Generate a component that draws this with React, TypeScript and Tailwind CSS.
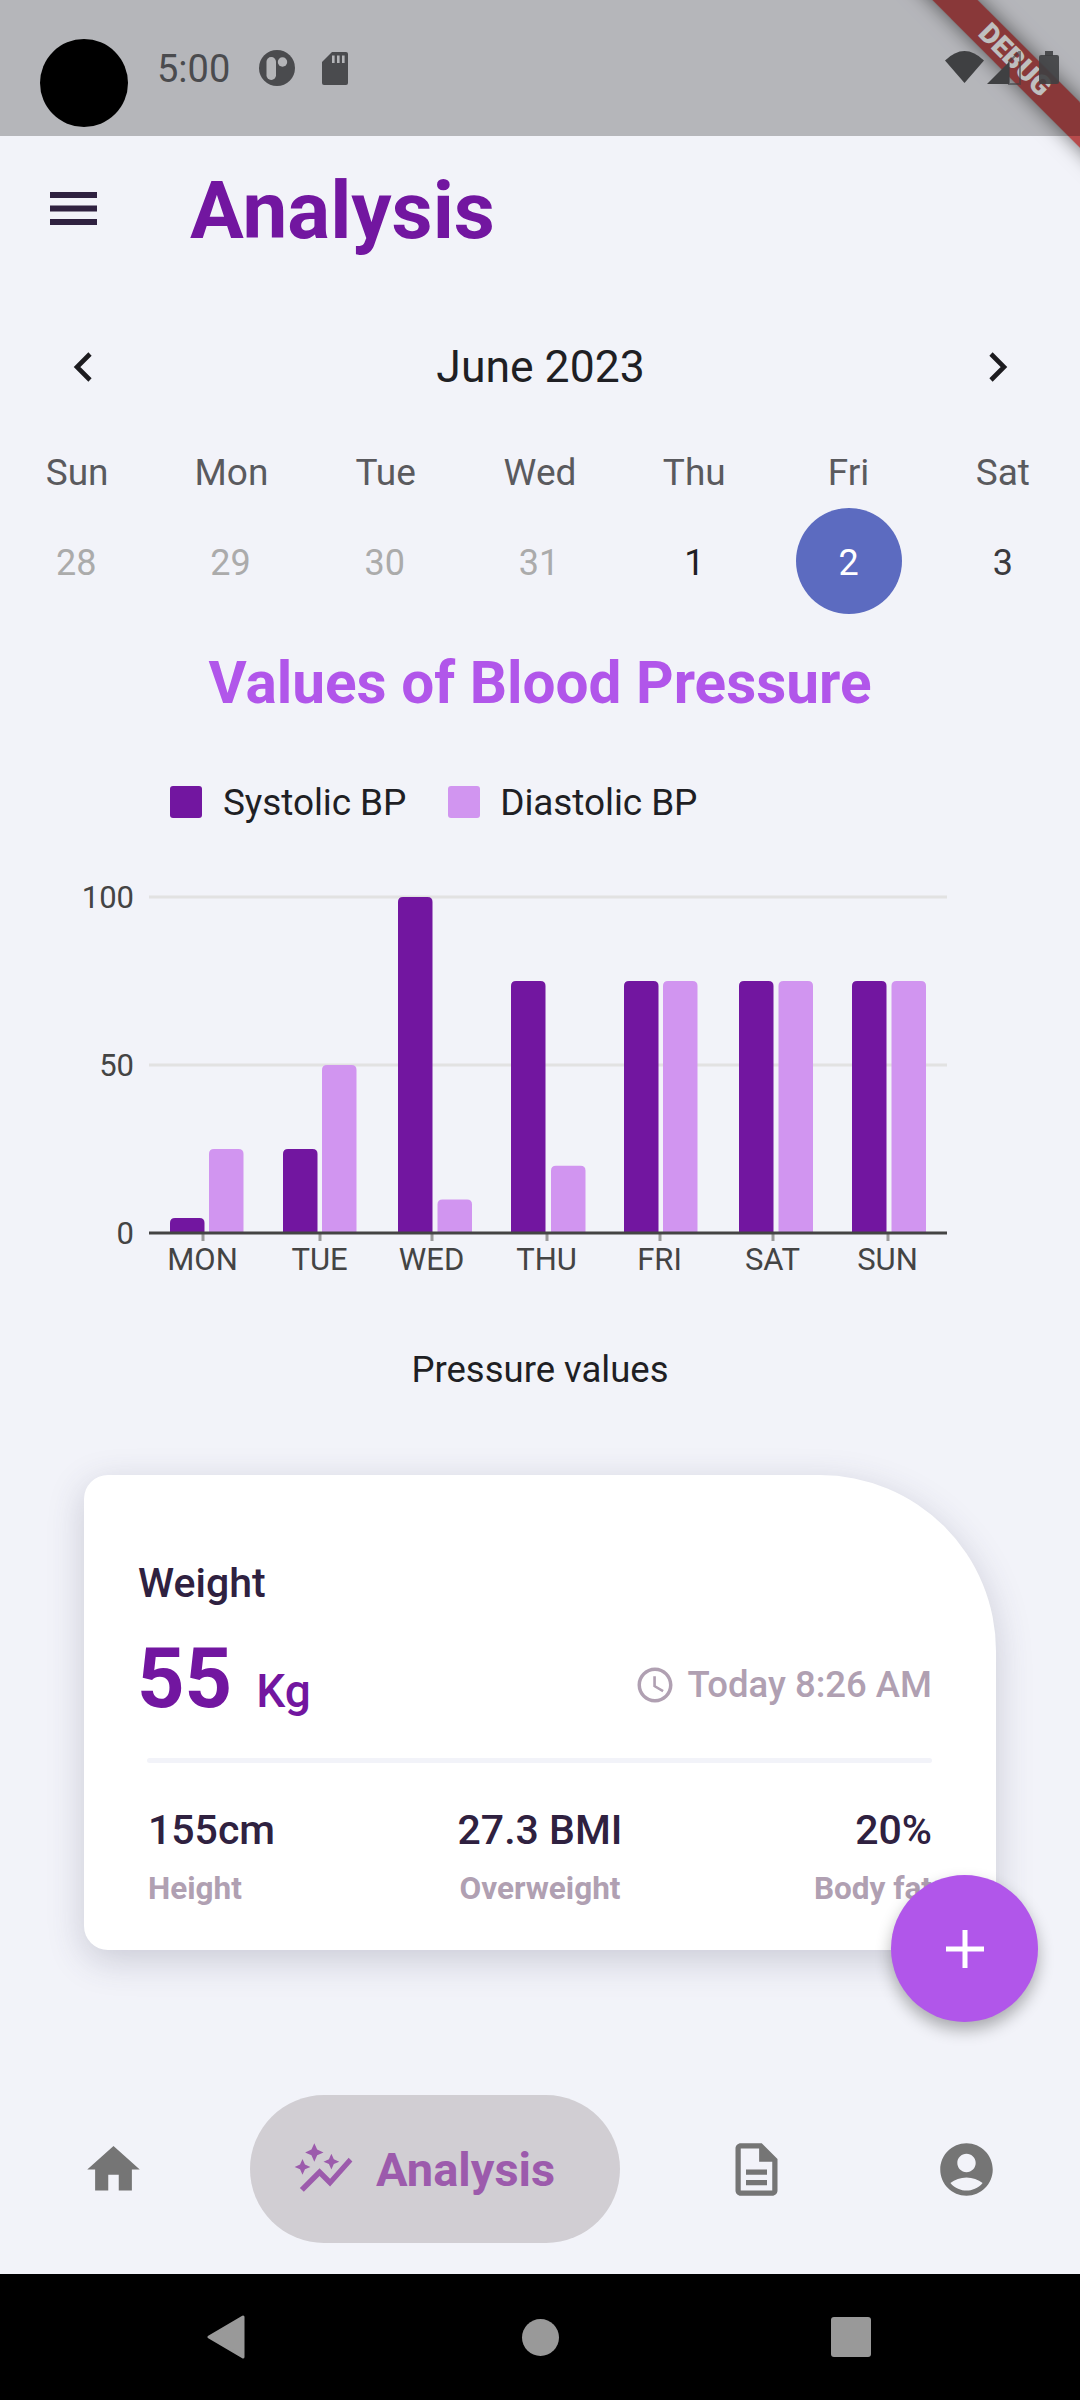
import React from "react";

const Y0 = 1233;
const SY = 3.36;
const OFF = 870;
const bars: [number, number, number, number, number][] = [
  [170, 4.5, 209, 25, 203],
  [283, 25, 322, 50, 320],
  [398, 100, 437.5, 10, 432],
  [511, 75, 551, 20, 547],
  [624, 75, 663, 75, 660],
  [739, 75, 778.5, 75, 773],
  [852, 75, 891.5, 75, 888],
];
const days = ["MON", "TUE", "WED", "THU", "FRI", "SAT", "SUN"];
const week = ["Sun", "Mon", "Tue", "Wed", "Thu", "Fri", "Sat"];

function barPath(x: number, v: number, w = 34.5) {
  const top = Y0 - v * SY - OFF;
  const bot = Y0 - OFF;
  const r = 5;
  return `M${x} ${bot}V${top + r}Q${x} ${top} ${x + r} ${top}H${x + w - r}Q${x + w} ${top} ${x + w} ${top + r}V${bot}Z`;
}

function Chart() {
  return (
    <svg width="1080" height="410" viewBox="0 0 1080 410" className="mt-[52px] block shrink-0">
      <rect x="149" y={897 - OFF - 1.5} width="798" height="3" fill="#e2e2e2" />
      <rect x="149" y={1065 - OFF - 1.5} width="798" height="3" fill="#e2e2e2" />
      {bars.map((b, i) => (
        <g key={i}>
          <path d={barPath(b[0], b[1])} fill="#7216a0" />
          <path d={barPath(b[2], b[3])} fill="#d195f0" />
          <rect x={b[4] - 1.5} y={Y0 - OFF} width="3" height="8" fill="#9a9a9a" />
          <text x={b[4] - 0.5} y={1270 - OFF} textAnchor="middle" fontSize="31" fill="#444444" fontFamily="Roboto">
            {days[i]}
          </text>
        </g>
      ))}
      <rect x="149" y={Y0 - OFF - 1.5} width="798" height="3" fill="#444444" />
      {[
        ["100", 897],
        ["50", 1065],
        ["0", 1233],
      ].map(([t, y]) => (
        <text key={t} x="134" y={(y as number) - OFF + 11} textAnchor="end" fontSize="31" fill="#444444" fontFamily="Roboto">
          {t}
        </text>
      ))}
    </svg>
  );
}

function Stat({ value, label, className }: { value: string; label: string; className: string }) {
  return (
    <div className={className}>
      <div className="text-[41px] leading-[50px] font-medium text-[#2f2140]">{value}</div>
      <div className="mt-[15px] text-[31.5px] leading-[38px] font-bold text-[#b0a0b2]">{label}</div>
    </div>
  );
}

export default function App() {
  return (
    <div className="relative w-[1080px] h-[2400px] overflow-hidden bg-[#f2f3f9] flex flex-col font-['Roboto',sans-serif]">
      {/* debug banner */}
      <div className="absolute left-[865px] top-[44px] z-10 w-[300px] h-[32px] rotate-45 bg-[#a82020]/[.8] shadow-[0_0_20px_rgba(0,0,0,.55)] flex items-center justify-center text-white text-[28px] font-black leading-none">
        DEBUG
      </div>

      {/* status bar */}
      <div className="relative z-20 h-[136px] shrink-0 bg-black/25 flex items-start pl-[40px]">
        <div className="mt-[39px] w-[88px] h-[88px] rounded-full bg-black shrink-0" />
        <span className="ml-[29px] mt-[50px] w-[102px] text-[38px] leading-[38px] text-[#4a4b4e]">5:00</span>
        <svg width="36" height="36" viewBox="0 0 36 36" className="mt-[50px] shrink-0">
          <circle cx="18" cy="18" r="18" fill="#4a4b4e" />
          <rect x="7.5" y="7" width="9.5" height="23" rx="4.7" fill="#b4b5b8" />
          <circle cx="23.5" cy="12" r="4.7" fill="#b4b5b8" />
        </svg>
        <svg width="26" height="33" viewBox="0 0 26 33" className="ml-[27px] mt-[52px] shrink-0">
          <path d="M10 0H24a2 2 0 0 1 2 2V31a2 2 0 0 1-2 2H2a2 2 0 0 1-2-2V10Z" fill="#4a4b4e" />
          <rect x="10" y="3.5" width="2.6" height="7.5" fill="#b4b5b8" />
          <rect x="15" y="3.5" width="2.6" height="7.5" fill="#b4b5b8" />
          <rect x="20" y="3.5" width="2.6" height="7.5" fill="#b4b5b8" />
        </svg>
        <svg width="115" height="34" viewBox="0 0 115 34" className="absolute left-[945px] top-[51px]">
          <path d="M0 9.5Q19.5-9.5 39 9.5L19.5 32Z" fill="#3f4042" />
          <path d="M42 33L64 11V33Z" fill="#3f4042" />
          <path d="M64 11L75 0V33H64Z" fill="none" stroke="#3f4042" strokeOpacity=".6" strokeWidth="2" />
          <rect x="94" y="4" width="20" height="29" rx="2" fill="#3f4042" fillOpacity=".9" />
          <rect x="100" y="0" width="8" height="5" fill="#3f4042" fillOpacity=".9" />
        </svg>
      </div>

      {/* header */}
      <div className="flex items-center h-[144px] shrink-0 pl-[50px]">
        <svg width="47" height="33" viewBox="0 0 47 33" className="shrink-0">
          <rect y="0" width="47" height="6" fill="#2f2140" />
          <rect y="13.5" width="47" height="6" fill="#2f2140" />
          <rect y="27" width="47" height="6" fill="#2f2140" />
        </svg>
        <h1 className="ml-[93px] mt-[5px] text-[80px] leading-none font-bold text-[#7216a0]">Analysis</h1>
      </div>

      {/* calendar */}
      <div className="mt-[47px] h-[80px] shrink-0 flex items-center justify-between pl-[70px] pr-[69px]">
        <svg width="24" height="30" viewBox="0 0 24 30">
          <path d="M20 2L7 15L20 28" fill="none" stroke="#1c1b1f" strokeWidth="4.6" />
        </svg>
        <span className="mt-[1px] text-[44.5px] leading-none text-[#1f1f24]">June 2023</span>
        <svg width="24" height="30" viewBox="0 0 24 30">
          <path d="M4 2L17 15L4 28" fill="none" stroke="#1c1b1f" strokeWidth="4.6" />
        </svg>
      </div>
      <div className="mt-[40px] pt-[1px] grid grid-cols-7 h-[50px] shrink-0 items-center text-center text-[37px] leading-none text-[#5a5a5e]">
        {week.map((d) => (
          <span key={d}>{d}</span>
        ))}
      </div>
      <div className="mt-[11px] grid grid-cols-7 h-[106px] shrink-0 items-center justify-items-center text-[36px] leading-none">
        {["28", "29", "30", "31"].map((d) => (
          <span key={d} className="pt-[3px] mr-[2px] text-[#ababab]">
            {d}
          </span>
        ))}
        <span className="pt-[3px] text-[#1f1f24]">1</span>
        <span className="pt-[3px] w-[106px] h-[106px] rounded-full bg-[#5c6bc0] text-white flex items-center justify-center">2</span>
        <span className="pt-[3px] text-[#3a3a3e]">3</span>
      </div>

      <h2 className="mt-[33px] pt-[3px] h-[70px] shrink-0 flex items-center justify-center text-[58.5px] leading-none font-bold text-[#b156ea]">
        Values of Blood Pressure
      </h2>

      {/* legend */}
      <div className="mt-[69px] h-[32px] shrink-0 flex items-center pl-[170px] text-[37px] leading-none text-[#1f1f24]">
        <span className="w-[32px] h-[32px] rounded-[3px] bg-[#7216a0]" />
        <span className="ml-[21px] tracking-[-0.1px]">Systolic BP</span>
        <span className="ml-[42px] w-[32px] h-[32px] rounded-[3px] bg-[#d195f0]" />
        <span className="ml-[20px] tracking-[-0.1px]">Diastolic BP</span>
      </div>

      <Chart />

      <div className="mt-[69px] pt-[3px] h-[40px] shrink-0 flex items-center justify-center text-[36.5px] leading-none text-[#1f1f24]">
        Pressure values
      </div>

      {/* card */}
      <div className="mt-[86px] ml-[84px] w-[912px] h-[475px] shrink-0 bg-white rounded-[24px] rounded-tr-[176px] shadow-[0_10px_36px_rgba(60,60,90,.22)]">
        <div className="pt-[85px] pl-[54px] text-[41px] leading-[47px] font-medium text-[#2f2140]">Weight</div>
        <div className="mt-[31px] h-[82px] flex items-start justify-between pl-[53px] pr-[64px]">
          <div className="flex items-baseline text-[#7216a0]">
            <span className="text-[83px] leading-[82px] font-bold">55</span>
            <span className="ml-[24px] text-[46px] leading-none font-medium">Kg</span>
          </div>
          <div className="flex items-center mt-[26px] text-[36.5px] leading-[42px] font-medium text-[#b0a0b2]">
            <svg width="42" height="42" viewBox="0 0 24 24" fill="#b0a0b2" className="mr-[12px]">
              <path d="M11.99 2C6.47 2 2 6.48 2 12s4.47 10 9.99 10C17.52 22 22 17.52 22 12S17.52 2 11.99 2zM12 20c-4.42 0-8-3.58-8-8s3.58-8 8-8 8 3.58 8 8-3.58 8-8 8zm.5-13H11v6l5.25 3.15.75-1.23-4.5-2.67z" />
            </svg>
            <span>Today 8:26 AM</span>
          </div>
        </div>
        <div className="mt-[38px] ml-[63px] mr-[64px] h-[5px] rounded-full bg-[#f2f3f9]" />
        <div className="mt-[42px] pl-[64px] pr-[64px] grid grid-cols-3">
          <Stat value="155cm" label="Height" className="text-left" />
          <Stat value="27.3 BMI" label="Overweight" className="text-center" />
          <Stat value="20%" label="Body fat" className="text-right" />
        </div>
      </div>

      {/* FAB */}
      <div className="absolute left-[891px] top-[1875px] z-10 w-[147px] h-[147px] rounded-full bg-[#b156ea] shadow-[0_8px_16px_rgba(0,0,0,.3)] flex items-center justify-center">
        <svg width="38" height="38" viewBox="0 0 38 38">
          <rect x="16.5" y="0" width="5" height="38" fill="#fff" />
          <rect x="0" y="16.5" width="38" height="5" fill="#fff" />
        </svg>
      </div>

      {/* bottom nav */}
      <div className="mt-auto h-[148px] mb-[31px] shrink-0 flex items-center pl-[82px]">
        <svg width="63" height="63" viewBox="0 0 24 24" fill="#757575" className="shrink-0">
          <path d="M10 20v-6h4v6h5v-8h3L12 3 2 12h3v8z" />
        </svg>
        <div className="ml-[105px] w-[370px] h-[148px] rounded-full bg-[#d1ced3] flex items-center pl-[42px] shrink-0">
          <svg width="63" height="63" viewBox="0 0 24 24" fill="#9c5bac" className="shrink-0">
            <path d="M14.06 9.94 12 9l2.06-.94L15 6l.94 2.06L18 9l-2.06.94L15 12zM4 14l.94-2.06L7 11l-2.06-.94L4 8l-.94 2.06L1 11l2.06.94zm4.5-5 1.09-2.41L12 5.5 9.59 4.41 8.5 2 7.41 4.41 5 5.5l2.41 1.09zm-4 11.5 6-6.01 4 4L23 8.93l-1.41-1.41-7.09 7.97-4-4L3 19z" />
          </svg>
          <span className="ml-[21px] text-[47px] leading-none font-bold text-[#9c5bac]">Analysis</span>
        </div>
        <svg width="63" height="63" viewBox="0 0 24 24" fill="#757575" className="ml-[105px] shrink-0">
          <path d="M8 16h8v2H8zm0-4h8v2H8zm6-10H6c-1.1 0-2 .9-2 2v16c0 1.1.89 2 1.99 2H18c1.1 0 2-.9 2-2V8l-6-6zm4 18H6V4h7v5h5v11z" />
        </svg>
        <svg width="63" height="63" viewBox="0 0 24 24" fill="#757575" className="ml-[147px] shrink-0">
          <path d="M12 2C6.48 2 2 6.48 2 12s4.48 10 10 10 10-4.48 10-10S17.52 2 12 2zm0 4c1.93 0 3.5 1.57 3.5 3.5S13.93 13 12 13s-3.5-1.57-3.5-3.5S10.07 6 12 6zm0 14c-2.03 0-4.43-.82-6.14-2.88C7.55 15.8 9.68 15 12 15s4.45.8 6.14 2.12C16.43 19.18 14.03 20 12 20z" />
        </svg>
      </div>

      {/* android nav */}
      <div className="h-[126px] shrink-0 bg-black flex items-center pl-[207px]">
        <svg width="38" height="44" viewBox="0 0 38 44">
          <path d="M36 2V42L2 22Z" fill="#999" stroke="#999" strokeWidth="3" strokeLinejoin="round" />
        </svg>
        <div className="ml-[277px] w-[37px] h-[37px] rounded-full bg-[#999]" />
        <div className="ml-[272px] w-[40px] h-[40px] rounded-[3px] bg-[#999]" />
      </div>
    </div>
  );
}
